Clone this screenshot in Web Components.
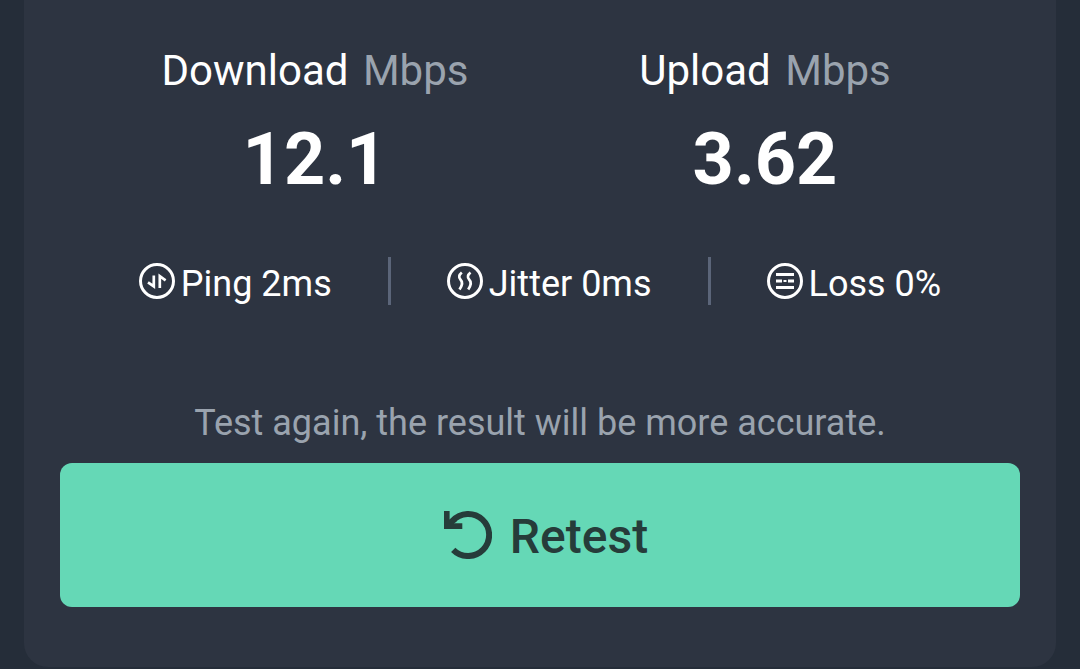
<!DOCTYPE html>
<html lang="en">
<head>
<meta charset="utf-8">
<meta name="viewport" content="width=device-width, initial-scale=1">
<title>Speed test</title>
<style>
body { margin: 0; background: #252d39; color: #fff; font-family: Roboto, "Liberation Sans", sans-serif; }
</style>
</head>
<body>
<result-card>
  <speed-value slot="speeds" label="Download" unit="Mbps" value="12.1"></speed-value>
  <speed-value slot="speeds" label="Upload" unit="Mbps" value="3.62"></speed-value>
  <net-metric slot="metrics" icon="ping">Ping 2ms</net-metric>
  <net-metric slot="metrics" icon="jitter">Jitter 0ms</net-metric>
  <net-metric slot="metrics" icon="loss">Loss 0%</net-metric>
  <span slot="hint">Test again, the result will be more accurate.</span>
  <retest-button slot="action">Retest</retest-button>
</result-card>
<script>
class ResultCard extends HTMLElement {
  constructor() {
    super();
    this.attachShadow({ mode: "open" }).innerHTML = `
      <style>
        :host { display: block; margin: 0 24px; padding: 47px 36px 60px; background: #2d3441; border-radius: 0 0 24px 24px; }
        .speeds { display: grid; grid-template-columns: 1fr 1fr; padding: 0 30px; }
        .metrics { display: flex; justify-content: center; gap: 56px; margin-top: 55px; }
        ::slotted(net-metric:not([icon="ping"])) { border-left: 3px solid #5b6579; padding-left: 56px; }
        p { margin: 94px 0 16px; font-size: 36px; line-height: 48px; color: #9aa3ae; text-align: center; }
      </style>
      <div class="speeds"><slot name="speeds"></slot></div>
      <div class="metrics"><slot name="metrics"></slot></div>
      <p><slot name="hint"></slot></p>
      <slot name="action"></slot>`;
  }
}
customElements.define("result-card", ResultCard);

class SpeedValue extends HTMLElement {
  connectedCallback() {
    if (this.shadowRoot) return;
    const root = this.attachShadow({ mode: "open" });
    root.innerHTML = `
      <style>
        :host { display: block; text-align: center; }
        .label { font-size: 42px; line-height: 48px; white-space: nowrap; }
        .unit { margin-left: 4px; color: #9aa3ae; }
        .value { margin-top: 23px; font-size: 72px; line-height: 84px; font-weight: 700; }
      </style>
      <div class="label"><span class="name"></span> <span class="unit"></span></div>
      <div class="value"></div>`;
    root.querySelector(".name").textContent = this.getAttribute("label");
    root.querySelector(".unit").textContent = this.getAttribute("unit");
    root.querySelector(".value").textContent = this.getAttribute("value");
  }
}
customElements.define("speed-value", SpeedValue);

const METRIC_ICONS = {
  ping: '<path d="M9 19.3L14.8 23.4V12.5M20.8 25V13.2L26.6 17.3" stroke-width="2.7"/>',
  jitter: '<path d="M14.8 9.5Q10.5 13 13.4 16.5Q17 20 12.5 26.5M23.5 9.5Q19.2 13 22.1 16.5Q25.7 20 21.2 26.5" stroke-width="2.7"/>',
  loss: '<path d="M9 11.5H27M9 18H15M21 18H27M9 24.5H27" stroke-width="3"/><path d="M16.5 18H19.5" stroke-width="2"/>'
};
class NetMetric extends HTMLElement {
  connectedCallback() {
    if (this.shadowRoot) return;
    this.attachShadow({ mode: "open" }).innerHTML = `
      <style>
        :host { display: flex; align-items: center; gap: 6px; font-size: 36px; line-height: 42px; white-space: nowrap; }
        svg { display: block; width: 36px; height: 36px; flex: none; }
        .text { padding-top: 6px; }
      </style>
      <svg viewBox="0 0 36 36" fill="none" stroke="currentColor" aria-hidden="true">
        <circle cx="18" cy="18" r="16.5" stroke-width="3"/>${METRIC_ICONS[this.getAttribute("icon")]}
      </svg>
      <span class="text"><slot></slot></span>`;
  }
}
customElements.define("net-metric", NetMetric);

class RetestButton extends HTMLElement {
  constructor() {
    super();
    this.attachShadow({ mode: "open" }).innerHTML = `
      <style>
        :host { display: block; }
        button { display: flex; align-items: center; justify-content: center; gap: 18px; width: 100%; height: 144px;
          margin: 0; padding: 0 0 0 12px; border: 0; border-radius: 12px; background: #65d8b6; color: #263c3a;
          font: 500 48px/56px Roboto, "Liberation Sans", sans-serif; cursor: pointer; }
        svg { display: block; width: 48px; height: 48px; flex: none; }
        .text { padding-top: 4px; }
      </style>
      <button type="button">
        <svg viewBox="0 0 48 48" fill="none" aria-hidden="true">
          <path d="M8.5 10A21 21 0 1 1 9.2 38.8" stroke="currentColor" stroke-width="6"/>
          <path d="M0 0H5.6V8.6L9 6L13 10L10 12.2H18.3V18H0Z" fill="currentColor"/>
        </svg>
        <span class="text"><slot></slot></span>
      </button>`;
  }
}
customElements.define("retest-button", RetestButton);
</script>
</body>
</html>
